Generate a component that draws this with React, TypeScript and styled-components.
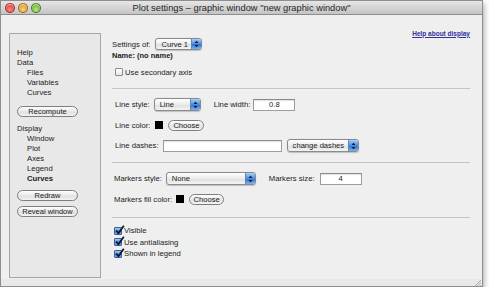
import React from "react";
import styled, { createGlobalStyle } from "styled-components";

const Global = createGlobalStyle`
  html, body { margin: 0; padding: 0; background: #ffffff; }
  body { font-family: "Liberation Sans", Arial, sans-serif; font-size: 7.7px; color: #1c1c1c; }
  * { box-sizing: border-box; }
`;

const Window = styled.div`
  width: 483px;
  height: 287px;
  border: 1px solid #8e8e8e;
  background: #efefef;
  display: flex;
  flex-direction: column;
  box-shadow: 0 3px 7px rgba(0, 0, 0, 0.45);
  overflow: hidden;
`;

const TitleBar = styled.div`
  height: 14px;
  flex: none;
  display: flex;
  align-items: center;
  position: relative;
  background: linear-gradient(#e6e6e6, #c4c4c4);
  border-bottom: 1px solid #8c8c8c;
`;

const Lights = styled.div`
  display: flex;
  gap: 3px;
  padding-left: 4px;
  position: relative;
  z-index: 1;
`;

const Light = styled.span<{ $c1: string; $c2: string }>`
  width: 10px;
  height: 10px;
  border-radius: 50%;
  border: 1px solid rgba(0, 0, 0, 0.35);
  background: radial-gradient(circle at 50% 70%, ${(p) => p.$c1} 0%, ${(p) => p.$c2} 80%);
  box-shadow: inset 0 1px 1px rgba(255, 255, 255, 0.7);
`;

const Title = styled.div`
  position: absolute;
  left: 0;
  right: 0;
  text-align: center;
  font-size: 9.3px;
  color: #262626;
`;

const Body = styled.div`
  flex: 1;
  display: flex;
  padding-left: 8px;
`;

const Sidebar = styled.div`
  width: 92px;
  height: 245px;
  margin-top: 18px;
  flex: none;
  background: #e8e8e8;
  border: 1px solid #a6a6a6;
  padding: 14px 0 0 7px;
  display: flex;
  flex-direction: column;
`;

const NavItem = styled.div<{ $sub?: boolean; $active?: boolean }>`
  height: 10px;
  line-height: 10px;
  padding-left: ${(p) => (p.$sub ? 10 : 0)}px;
  font-weight: ${(p) => (p.$active ? "bold" : "normal")};
  color: ${(p) => (p.$sub ? "#222" : "#1a1a1a")};
`;

const SideButton = styled.div<{ $mt: number }>`
  width: 61px;
  height: 11px;
  margin-top: ${(p) => p.$mt}px;
  border: 1px solid #7e7e7e;
  border-radius: 6px;
  background: linear-gradient(#ffffff, #e2e2e2 60%, #f2f2f2);
  display: flex;
  align-items: center;
  justify-content: center;
  font-size: 7.5px;
  color: #1a1a1a;
`;

const Main = styled.div`
  flex: 1;
  margin-left: 11px;
  margin-right: 12px;
  padding-top: 13px;
  display: flex;
  flex-direction: column;
`;

const Row = styled.div<{ $h: number; $mt?: number; $pl?: number }>`
  height: ${(p) => p.$h}px;
  margin-top: ${(p) => p.$mt ?? 0}px;
  padding-left: ${(p) => p.$pl ?? 0}px;
  display: flex;
  align-items: center;
  white-space: nowrap;
`;

const HelpRow = styled.div`
  height: 10px;
  display: flex;
  justify-content: flex-end;
  align-items: center;
`;

const HelpLink = styled.a`
  font-size: 6.5px;
  font-weight: bold;
  color: #30309c;
  text-decoration: underline;
`;

const Label = styled.span<{ $ml?: number }>`
  margin-left: ${(p) => p.$ml ?? 0}px;
`;

const Bold = styled.span`
  font-weight: bold;
  font-size: 7.5px;
`;

const Separator = styled.div<{ $mt: number }>`
  margin-top: ${(p) => p.$mt}px;
  height: 1px;
  background: #c4c4c4;
  flex: none;
`;

const PopupBox = styled.div<{ $w: number; $ml: number }>`
  width: ${(p) => p.$w}px;
  height: 12.5px;
  margin-left: ${(p) => p.$ml}px;
  border: 1px solid #8a8a8a;
  border-radius: 3px;
  background: linear-gradient(#ffffff, #ececec 50%, #dedede 51%, #f4f4f4);
  display: flex;
  overflow: hidden;
  box-shadow: 0 0.5px 1px rgba(0, 0, 0, 0.2);
`;

const PopupText = styled.span`
  flex: 1;
  padding-left: 5px;
  display: flex;
  align-items: center;
  font-size: 7.6px;
`;

const PopupArrow = styled.span`
  width: 10px;
  flex: none;
  background: linear-gradient(#a9ccf4, #4d8fe0 50%, #2a6fd6 51%, #7ab3f2);
  border-left: 1px solid #5f86b8;
  display: flex;
  align-items: center;
  justify-content: center;
`;

const Popup = ({ text, w, ml }: { text: string; w: number; ml: number }) => (
  <PopupBox $w={w} $ml={ml}>
    <PopupText>{text}</PopupText>
    <PopupArrow>
      <svg width="5" height="8" viewBox="0 0 5 8">
        <path d="M0.5 3 L2.5 0.8 L4.5 3 Z" fill="#0c1c3a" />
        <path d="M0.5 5 L2.5 7.2 L4.5 5 Z" fill="#0c1c3a" />
      </svg>
    </PopupArrow>
  </PopupBox>
);

const Input = styled.div<{ $w: number; $ml: number }>`
  width: ${(p) => p.$w}px;
  height: 12px;
  margin-left: ${(p) => p.$ml}px;
  background: #ffffff;
  border: 1px solid #9c9c9c;
  border-top-color: #8a8a8a;
  box-shadow: inset 0 1px 1px rgba(0, 0, 0, 0.12);
  display: flex;
  align-items: center;
  justify-content: center;
  font-size: 7.6px;
`;

const Swatch = styled.span<{ $ml: number }>`
  width: 8px;
  height: 8px;
  margin-left: ${(p) => p.$ml}px;
  background: #000;
  flex: none;
`;

const PillButton = styled.div<{ $w: number; $ml: number }>`
  width: ${(p) => p.$w}px;
  height: 11px;
  margin-left: ${(p) => p.$ml}px;
  border: 1px solid #7e7e7e;
  border-radius: 6px;
  background: linear-gradient(#ffffff, #e4e4e4 60%, #f4f4f4);
  display: flex;
  align-items: center;
  justify-content: center;
  font-size: 7.6px;
`;

const Box = styled.span<{ $checked?: boolean }>`
  width: 8px;
  height: 8px;
  flex: none;
  border: 1px solid ${(p) => (p.$checked ? "#3b5f99" : "#8a8a8a")};
  border-radius: 1px;
  background: ${(p) =>
    p.$checked ? "linear-gradient(#a8cbf2, #4a8ade 55%, #6aa6ee)" : "linear-gradient(#ffffff, #e6e6e6)"};
  position: relative;
  margin-right: 2px;
`;

const CheckMark = styled.svg`
  position: absolute;
  left: 0px;
  top: -3px;
`;

const Checkbox = ({ checked, label }: { checked?: boolean; label: string }) => (
  <>
    <Box $checked={checked}>
      {checked && (
        <CheckMark width="10" height="10" viewBox="0 0 10 10">
          <path d="M1.2 5.5 L3.4 8.2 L8.8 0.8" stroke="#0d1530" strokeWidth="1.8" fill="none" />
        </CheckMark>
      )}
    </Box>
    <Label>{label}</Label>
  </>
);

const BottomBar = styled.div`
  height: 7px;
  flex: none;
  background: #e9e9e9;
  display: flex;
  justify-content: flex-end;
  align-items: flex-end;
`;

export default function App() {
  return (
    <>
      <Global />
      <Window>
        <TitleBar>
          <Lights>
            <Light $c1="#ff8a80" $c2="#d8372c" />
            <Light $c1="#ffd77a" $c2="#d9921a" />
            <Light $c1="#b6ec7c" $c2="#5ea72a" />
          </Lights>
          <Title>Plot settings – graphic window "new graphic window"</Title>
        </TitleBar>
        <Body>
          <Sidebar>
            <NavItem>Help</NavItem>
            <NavItem>Data</NavItem>
            <NavItem $sub>Files</NavItem>
            <NavItem $sub>Variables</NavItem>
            <NavItem $sub>Curves</NavItem>
            <SideButton $mt={8}>Recompute</SideButton>
            <NavItem style={{ marginTop: 7 }}>Display</NavItem>
            <NavItem $sub>Window</NavItem>
            <NavItem $sub>Plot</NavItem>
            <NavItem $sub>Axes</NavItem>
            <NavItem $sub>Legend</NavItem>
            <NavItem $sub $active>Curves</NavItem>
            <SideButton $mt={6}>Redraw</SideButton>
            <SideButton $mt={5}>Reveal window</SideButton>
          </Sidebar>
          <Main>
            <HelpRow>
              <HelpLink>Help about display</HelpLink>
            </HelpRow>
            <Row $h={12}>
              <Label>Settings of:</Label>
              <Popup text="Curve 1" w={47} ml={5} />
            </Row>
            <Row $h={10}>
              <Bold>Name: (no name)</Bold>
            </Row>
            <Row $h={12} $mt={6} $pl={3}>
              <Checkbox label="Use secondary axis" />
            </Row>
            <Separator $mt={10} />
            <Row $h={13} $mt={9} $pl={3}>
              <Label>Line style:</Label>
              <Popup text="Line" w={47} ml={4} />
              <Label $ml={13}>Line width:</Label>
              <Input $w={42} $ml={3}>0.8</Input>
            </Row>
            <Row $h={14} $mt={7} $pl={3}>
              <Label>Line color:</Label>
              <Swatch $ml={5} />
              <PillButton $w={36} $ml={5}>Choose</PillButton>
            </Row>
            <Row $h={13} $mt={7} $pl={3}>
              <Label>Line dashes:</Label>
              <Input $w={119} $ml={4} />
              <Popup text="change dashes" w={72} ml={5} />
            </Row>
            <Separator $mt={10} />
            <Row $h={13} $mt={9} $pl={2}>
              <Label>Markers style:</Label>
              <Popup text="None" w={90} ml={4} />
              <Label $ml={13}>Markers size:</Label>
              <Input $w={42} $ml={5}>4</Input>
            </Row>
            <Row $h={12} $mt={8} $pl={2}>
              <Label>Markers fill color:</Label>
              <Swatch $ml={4} />
              <PillButton $w={35} $ml={5}>Choose</PillButton>
            </Row>
            <Separator $mt={12} />
            <Row $h={11.5} $mt={7} $pl={2}>
              <Checkbox checked label="Visible" />
            </Row>
            <Row $h={11.5} $pl={2}>
              <Checkbox checked label="Use antialiasing" />
            </Row>
            <Row $h={11.5} $pl={2}>
              <Checkbox checked label="Shown in legend" />
            </Row>
          </Main>
        </Body>
        <BottomBar>
          <svg width="9" height="7" viewBox="0 0 9 7">
            <path d="M8 1 L2 7 M8 3.5 L4.5 7 M8 6 L7 7" stroke="#9a9a9a" strokeWidth="0.8" />
          </svg>
        </BottomBar>
      </Window>
    </>
  );
}
